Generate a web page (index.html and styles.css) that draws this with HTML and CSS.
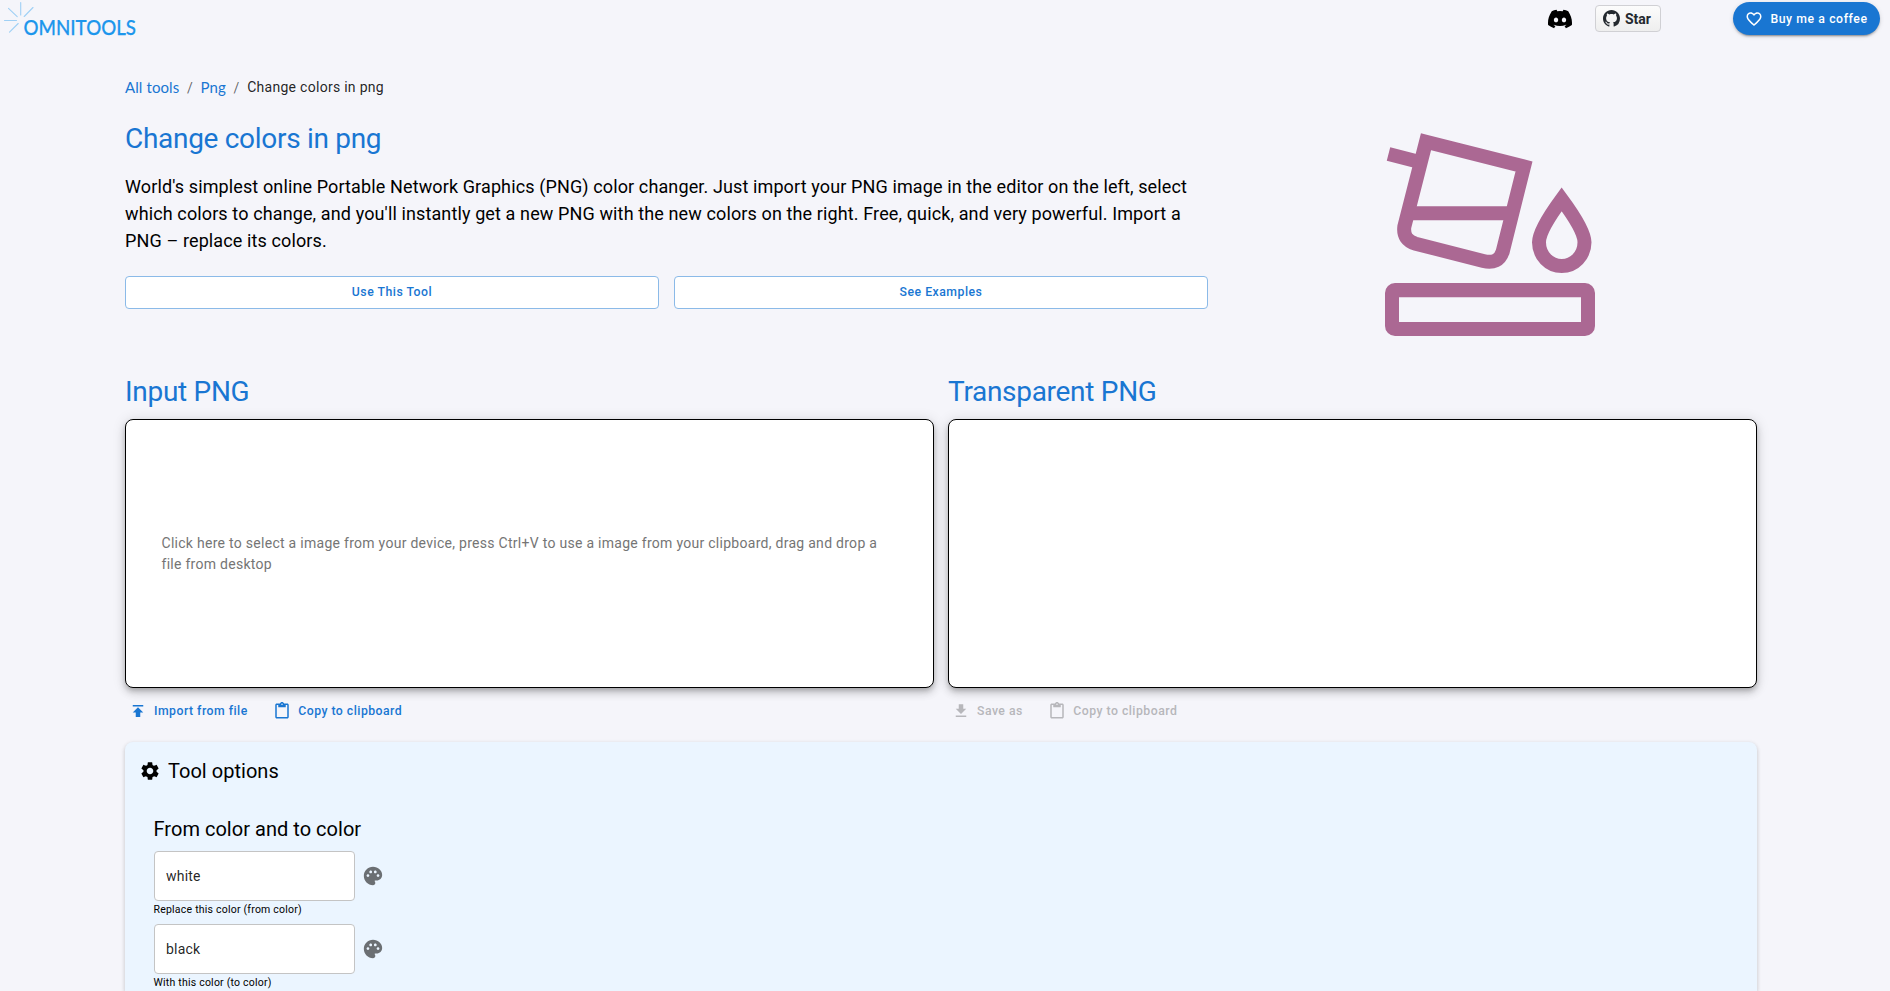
FILE: index.html
```html
<!DOCTYPE html>
<html lang="en">
<head>
<meta charset="utf-8">
<title>OmniTools - Change colors in png</title>
<link rel="stylesheet" href="styles.css">
</head>
<body>
<header class="navbar">
  <svg class="logo" width="160" height="48" viewBox="0 0 160 48">
    <g stroke="#9fd0f5" stroke-width="1.1" fill="none" stroke-linecap="round">
      <path d="M20.7 2.5V15M8.5 8.300L17.200 16.700M33 7.500L24.200 16.500M4.500 20.500H16.500M9.500 32.200L18.200 23.500"/>
    </g>
    <text class="logo-text" x="23.500" y="35" textLength="112.500" lengthAdjust="spacingAndGlyphs">OMNITOOLS</text>
  </svg>
  <div class="nav-actions">
    <svg class="discord" width="24" height="24" viewBox="0 0 24 24"><path d="M20.317 4.37a19.791 19.791 0 0 0-4.885-1.515.074.074 0 0 0-.079.037c-.21.375-.444.864-.608 1.25a18.27 18.27 0 0 0-5.487 0 12.64 12.64 0 0 0-.617-1.25.077.077 0 0 0-.079-.037A19.736 19.736 0 0 0 3.677 4.37a.07.07 0 0 0-.032.027C.533 9.046-.32 13.58.099 18.057a.082.082 0 0 0 .031.057 19.9 19.9 0 0 0 5.993 3.03.078.078 0 0 0 .084-.028c.462-.63.874-1.295 1.226-1.994a.076.076 0 0 0-.041-.106 13.107 13.107 0 0 1-1.872-.892.077.077 0 0 1-.008-.128c.126-.094.252-.192.372-.292a.074.074 0 0 1 .077-.01c3.928 1.793 8.18 1.793 12.062 0a.074.074 0 0 1 .078.01c.12.098.246.198.373.292a.077.077 0 0 1-.006.127 12.3 12.3 0 0 1-1.873.892.077.077 0 0 0-.041.107c.36.698.772 1.362 1.225 1.993a.076.076 0 0 0 .084.028 19.839 19.839 0 0 0 6.002-3.03.077.077 0 0 0 .032-.054c.5-5.177-.838-9.674-3.549-13.66a.061.061 0 0 0-.031-.03zM8.02 15.33c-1.183 0-2.157-1.085-2.157-2.419 0-1.333.956-2.419 2.157-2.419 1.21 0 2.176 1.096 2.157 2.42 0 1.333-.956 2.418-2.157 2.418zm7.975 0c-1.183 0-2.157-1.085-2.157-2.419 0-1.333.955-2.419 2.157-2.419 1.21 0 2.176 1.096 2.157 2.42 0 1.333-.946 2.418-2.157 2.418z"/></svg>
    <a class="star">
      <svg width="17" height="17" viewBox="0 0 16 16"><path fill="#24292f" d="M8 0C3.58 0 0 3.58 0 8c0 3.54 2.29 6.53 5.47 7.59.4.07.55-.17.55-.38 0-.19-.01-.82-.01-1.49-2.01.37-2.53-.49-2.69-.94-.09-.23-.48-.94-.82-1.13-.28-.15-.68-.52-.01-.53.63-.01 1.08.58 1.23.82.72 1.21 1.87.87 2.33.66.07-.52.28-.87.51-1.07-1.78-.2-3.64-.89-3.64-3.95 0-.87.31-1.59.82-2.15-.08-.2-.36-1.02.08-2.12 0 0 .67-.21 2.2.82.64-.18 1.32-.27 2-.27s1.36.09 2 .27c1.53-1.04 2.2-.82 2.2-.82.44 1.1.16 1.92.08 2.12.51.56.82 1.27.82 2.15 0 3.07-1.87 3.75-3.65 3.95.29.25.54.73.54 1.48 0 1.07-.01 1.93-.01 2.2 0 .21.15.46.55.38A8.01 8.01 0 0 0 16 8c0-4.42-3.58-8-8-8z"/></svg>
      <span>Star</span>
    </a>
    <button class="coffee">
      <svg width="18" height="18" viewBox="0 0 24 24" fill="currentColor"><path d="M16.5 3c-1.740 0-3.410.81-4.500 2.090C10.910 3.810 9.240 3 7.500 3 4.420 3 2 5.420 2 8.500c0 3.780 3.400 6.860 8.550 11.540L12 21.350l1.450-1.320C18.600 15.360 22 12.280 22 8.500 22 5.420 19.580 3 16.500 3m-4.400 15.550-.1.100-.1-.1C7.140 14.240 4 11.390 4 8.500 4 6.500 5.500 5 7.500 5c1.540 0 3.040.99 3.570 2.360h1.870C13.460 5.990 14.960 5 16.500 5c2 0 3.500 1.500 3.500 3.500 0 2.890-3.140 5.740-7.900 10.050"/></svg>
      <span>Buy me a coffee</span>
    </button>
  </div>
</header>
<main class="page">
  <nav class="crumbs">
    <a class="crumb-link">All tools</a><span class="sep">/</span><a class="crumb-link">Png</a><span class="sep">/</span><span class="crumb-current">Change colors in png</span>
  </nav>
  <section class="hero">
    <div class="hero-text">
      <h1 class="title">Change colors in png</h1>
      <p class="description">World's simplest online Portable Network Graphics (PNG) color changer. Just import your PNG image in the editor on the left, select which colors to change, and you'll instantly get a new PNG with the new colors on the right. Free, quick, and very powerful. Import a PNG – replace its colors.</p>
      <div class="hero-buttons">
        <button class="outlined">Use This Tool</button>
        <button class="outlined">See Examples</button>
      </div>
    </div>
    <div class="hero-art">
      <svg width="210" height="203" viewBox="75 69 630 609" fill="none" stroke="#ab6893" stroke-width="42">
        <path d="M198 95.500L492 169.500L428 425Q415 464 370 453L167 401Q128 390 133 350Z"/>
        <path d="M85.500 132L170 153.500M150 310H450"/>
        <path d="M605 268Q537 360 537 397A68 71 0 0 0 673.500 397Q673.500 360 605 268Z"/>
        <path fill="#ab6893" fill-rule="evenodd" stroke="none" d="M105 519H675A30 30 0 0 1 705 549V648A30 30 0 0 1 675 678H105A30 30 0 0 1 75 648V549A30 30 0 0 1 105 519ZM117 562V636H663V562Z"/>
      </svg>
    </div>
  </section>
  <section class="panels">
    <div class="panel">
      <h2 class="title">Input PNG</h2>
      <div class="dropzone"><p class="hint">Click here to select a image from your device, press Ctrl+V to use a image from your clipboard, drag and drop a file from desktop</p></div>
      <div class="panel-actions">
        <button class="text-button"><svg width="18" height="18" viewBox="0 0 24 24"><path d="M5 4v2h14V4zm0 10h4v6h6v-6h4l-7-7z"/></svg><span>Import from file</span></button>
        <button class="text-button"><svg width="18" height="18" viewBox="0 0 24 24"><path d="M19 2h-4.180C14.400.84 13.300 0 12 0S9.600.84 9.180 2H5c-1.100 0-2 .9-2 2v16c0 1.100.9 2 2 2h14c1.100 0 2-.9 2-2V4c0-1.100-.9-2-2-2m-7 0c.55 0 1 .45 1 1s-.45 1-1 1-1-.45-1-1 .45-1 1-1m7 18H5V4h2v3h10V4h2z"/></svg><span>Copy to clipboard</span></button>
      </div>
    </div>
    <div class="panel">
      <h2 class="title">Transparent PNG</h2>
      <div class="dropzone"></div>
      <div class="panel-actions">
        <button class="text-button disabled"><svg width="18" height="18" viewBox="0 0 24 24"><path d="M5 20h14v-2H5zM19 9h-4V3H9v6H5l7 7z"/></svg><span>Save as</span></button>
        <button class="text-button disabled"><svg width="18" height="18" viewBox="0 0 24 24"><path d="M19 2h-4.180C14.400.84 13.300 0 12 0S9.600.84 9.180 2H5c-1.100 0-2 .9-2 2v16c0 1.100.9 2 2 2h14c1.100 0 2-.9 2-2V4c0-1.100-.9-2-2-2m-7 0c.55 0 1 .45 1 1s-.45 1-1 1-1-.45-1-1 .45-1 1-1m7 18H5V4h2v3h10V4h2z"/></svg><span>Copy to clipboard</span></button>
      </div>
    </div>
  </section>
  <section class="options">
    <div class="options-head">
      <svg width="22" height="22" viewBox="0 0 24 24"><path d="M19.140 12.940c.04-.3.06-.61.06-.94 0-.32-.02-.64-.07-.94l2.030-1.580c.18-.14.23-.41.12-.61l-1.920-3.320c-.12-.22-.37-.29-.59-.22l-2.390.96c-.5-.38-1.030-.7-1.620-.94l-.36-2.540c-.04-.24-.24-.41-.48-.41h-3.840c-.24 0-.43.17-.47.41l-.36 2.540c-.59.24-1.130.57-1.620.94l-2.390-.96c-.22-.08-.47 0-.59.22L2.740 8.870c-.12.21-.08.47.12.61l2.030 1.580c-.05.3-.09.63-.09.94s.02.64.07.94l-2.030 1.580c-.18.14-.23.41-.12.61l1.920 3.320c.12.22.37.29.59.22l2.390-.96c.5.38 1.030.7 1.620.94l.36 2.540c.05.24.24.41.48.41h3.840c.24 0 .44-.17.47-.41l.36-2.540c.59-.24 1.130-.56 1.620-.94l2.390.96c.22.08.47 0 .59-.22l1.920-3.320c.12-.22.07-.47-.12-.61zM12 15.600c-1.980 0-3.600-1.620-3.600-3.600s1.620-3.600 3.600-3.600 3.600 1.620 3.600 3.600-1.620 3.600-3.600 3.600"/></svg>
      <h3 class="options-title">Tool options</h3>
    </div>
    <div class="group">
      <h3 class="options-title">From color and to color</h3>
      <div class="field">
        <div class="field-row"><input class="input" value="white"><svg class="palette" width="22" height="22" viewBox="0 0 24 24"><path d="M12 2C6.490 2 2 6.490 2 12s4.490 10 10 10c1.380 0 2.500-1.120 2.500-2.500 0-.61-.23-1.200-.64-1.670-.08-.1-.13-.21-.13-.33 0-.28.22-.5.5-.5H16c3.310 0 6-2.690 6-6 0-4.960-4.490-9-10-9m5.500 11c-.83 0-1.500-.67-1.500-1.500s.67-1.500 1.500-1.500 1.500.67 1.500 1.500-.67 1.500-1.500 1.500m-3-4c-.83 0-1.500-.67-1.500-1.500S13.670 6 14.500 6s1.500.67 1.500 1.500S15.330 9 14.500 9M5 11.500c0-.83.67-1.500 1.500-1.500s1.500.67 1.500 1.500S7.330 13 6.500 13 5 12.330 5 11.500m6-4c0 .83-.67 1.500-1.500 1.500S8 8.330 8 7.500 8.670 6 9.500 6s1.500.67 1.500 1.500"/></svg></div>
        <p class="helper">Replace this color (from color)</p>
      </div>
      <div class="field">
        <div class="field-row"><input class="input" value="black"><svg class="palette" width="22" height="22" viewBox="0 0 24 24"><path d="M12 2C6.490 2 2 6.490 2 12s4.490 10 10 10c1.380 0 2.500-1.120 2.500-2.500 0-.61-.23-1.200-.64-1.670-.08-.1-.13-.21-.13-.33 0-.28.22-.5.5-.5H16c3.310 0 6-2.690 6-6 0-4.960-4.490-9-10-9m5.500 11c-.83 0-1.500-.67-1.500-1.500s.67-1.500 1.500-1.500 1.500.67 1.500 1.500-.67 1.500-1.500 1.500m-3-4c-.83 0-1.500-.67-1.500-1.500S13.670 6 14.500 6s1.500.67 1.500 1.500S15.330 9 14.500 9M5 11.500c0-.83.67-1.500 1.500-1.500s1.500.67 1.500 1.500S7.330 13 6.500 13 5 12.330 5 11.500m6-4c0 .83-.67 1.500-1.500 1.500S8 8.330 8 7.500 8.670 6 9.500 6s1.500.67 1.500 1.500"/></svg></div>
        <p class="helper">With this color (to color)</p>
      </div>
    </div>
  </section>
</main>
</body>
</html>
```

FILE: styles.css
```css
* { box-sizing: border-box; }
body {
  margin: 0;
  height: 991px;
  display: flex;
  flex-direction: column;
  background: #f5f5fa;
  color: #000;
  font-family: Roboto, "Liberation Sans", sans-serif;
}
h1, h2, h3, p { margin: 0; font-weight: 400; }
button { font-family: inherit; border: 0; background: none; padding: 0; margin: 0; }
svg { display: block; flex: none; }

.navbar {
  flex: none;
  height: 38px;
  display: flex;
  align-items: flex-start;
  justify-content: space-between;
  padding-right: 10px;
}
.logo { overflow: visible; }
.logo-text { font-family: Lato, sans-serif; font-size: 21px; font-weight: 500; fill: #1c96ec; stroke: #1c96ec; stroke-width: 0.25px; }
.nav-actions { display: flex; align-items: center; height: 37px; }
.discord { margin-right: 23px; }
.star {
  display: flex;
  align-items: center;
  gap: 5px;
  width: 66px;
  height: 27px;
  margin-right: 72px;
  padding-left: 7px;
  border: 1px solid #d0d0d4;
  border-radius: 4px;
  background: linear-gradient(#fcfcfc, #eee);
  color: #24292f;
  font-size: 14px;
  font-weight: 700;
}
.coffee {
  display: flex;
  align-items: center;
  justify-content: center;
  gap: 7px;
  width: 147px;
  height: 33px;
  border-radius: 50px;
  background: #1976d2;
  color: #fff;
  font-size: 12.25px;
  font-weight: 500;
  letter-spacing: 0.58px;
  box-shadow: 0 3px 1px -2px rgba(0,0,0,.2), 0 2px 2px 0 rgba(0,0,0,.14), 0 1px 5px 0 rgba(0,0,0,.12);
}

.page {
  flex: 1;
  min-height: 0;
  display: flex;
  flex-direction: column;
  width: 1632px;
  margin-left: 125px;
  padding-top: 38px;
}
.crumbs { display: flex; align-items: center; height: 24px; font-size: 14px; line-height: 21px; letter-spacing: 0.28px; }
.crumb-link { color: #1976d2; font-family: Lato, sans-serif; font-size: 15px; letter-spacing: 0.1px; padding-bottom: 1px; }
.sep { margin: 0 7.600px; color: rgba(0,0,0,.6); }
.crumb-current { color: rgba(0,0,0,.87); padding-bottom: 2px; }

.title { color: #1976d2; font-size: 28px; line-height: 35px; letter-spacing: -0.3px; }
.hero { display: flex; gap: 15px; margin-top: 21px; }
.hero-text { width: 1083px; }
.description { margin-top: 17px; font-size: 18px; line-height: 27px; letter-spacing: 0.12px; }
.hero-buttons { display: flex; gap: 15px; margin-top: 22px; }
.outlined {
  flex: 1;
  height: 33px;
  padding-bottom: 2px;
  border: 1px solid #8bbae8;
  border-radius: 4px;
  background: #fff;
  color: #1976d2;
  font-size: 12.25px;
  font-weight: 500;
  letter-spacing: 0.5px;
}
.hero-art { flex: 1; display: flex; justify-content: center; padding-top: 12px; }

.panels { display: grid; grid-template-columns: 1fr 1fr; gap: 14px; margin-top: 38px; }
.dropzone {
  display: flex;
  align-items: center;
  height: 269px;
  margin-top: 10px;
  padding: 0 36px 0 35.500px;
  border: 1px solid #000;
  border-radius: 8px;
  background: #fff;
  box-shadow: 0 3px 5px -1px rgba(0,0,0,.2), 0 5px 8px 0 rgba(0,0,0,.14), 0 1px 14px 0 rgba(0,0,0,.12);
}
.hint { color: #757575; font-size: 14px; line-height: 21px; letter-spacing: 0.28px; }
.panel-actions { display: flex; gap: 25.500px; padding: 6px 0 0 4px; }
.text-button {
  display: flex;
  align-items: center;
  gap: 7px;
  height: 34px;
  padding-bottom: 1px;
  color: #1976d2;
  fill: currentColor;
  font-size: 12.25px;
  font-weight: 500;
  letter-spacing: 0.48px;
}
.disabled { color: #b7b7bb; }

.options {
  flex: 1;
  min-height: 0;
  margin-top: 14px;
  padding: 15px 14px 0;
  border-radius: 8px 8px 0 0;
  background: #ebf5ff;
  box-shadow: 0 2px 4px rgba(0,0,0,.14), 0 1px 5px rgba(0,0,0,.08);
}
.options-head { display: flex; align-items: center; gap: 7px; height: 28px; }
.options-title { font-size: 20px; line-height: 28px; letter-spacing: 0.03px; }
.group { margin-top: 30px; padding-left: 14.500px; }
.field { height: 73px; }
.field:last-child { height: 67px; }
.group > .options-title { margin-bottom: 8px; }
.field-row { display: flex; align-items: center; gap: 7px; }
.input {
  width: 201px;
  height: 50px;
  padding: 0 11.500px;
  border: 1px solid #c4c4c4;
  border-radius: 4px;
  background: #fff;
  color: rgba(0,0,0,.87);
  font-family: inherit;
  font-size: 14px;
  letter-spacing: 0.2px;
}
.palette { fill: #6b6f73; }
.helper { font-size: 10.500px; line-height: 17px; letter-spacing: 0.22px; }
```
